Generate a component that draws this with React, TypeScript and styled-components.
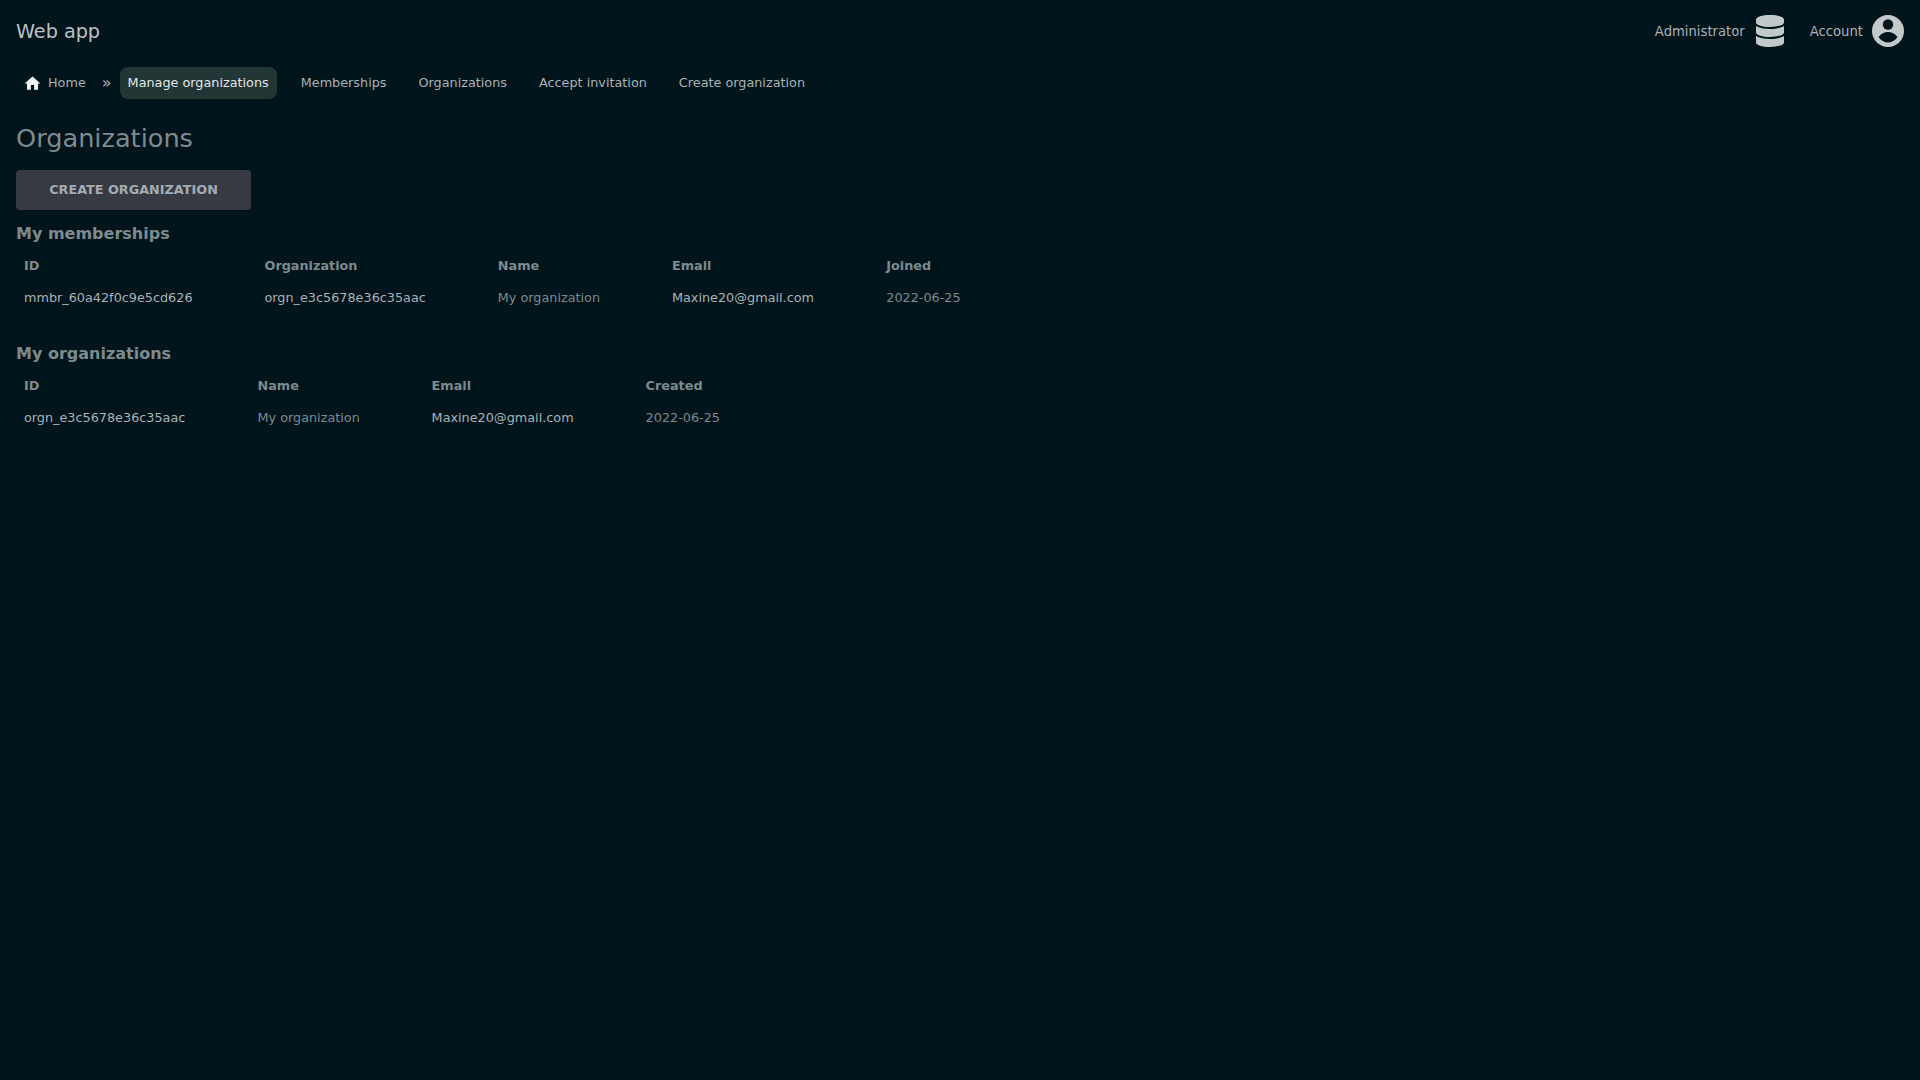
import React from "react";
import styled, { createGlobalStyle } from "styled-components";
import { FaDatabase } from "react-icons/fa";
import { MdHome } from "react-icons/md";

const Global = createGlobalStyle`
  html, body {
    margin: 0;
    height: 100%;
    background: #00141b;
    font-family: "DejaVu Sans", sans-serif;
  }
`;

const Page = styled.div`
  min-height: 1080px;
  background: #00141b;
  color: #7d8a8e;
  padding: 0 16px;
  box-sizing: border-box;
`;

const TopBar = styled.header`
  display: flex;
  align-items: center;
  justify-content: space-between;
  height: 62px;
`;

const Brand = styled.div`
  font-size: 19.2px;
  color: #bcc3c5;
`;

const UserMenu = styled.div`
  display: flex;
  align-items: center;
  gap: 24px;
`;

const UserItem = styled.div`
  display: flex;
  align-items: center;
  gap: 9px;
  font-size: 13.2px;
  color: #a9b2b5;

  svg {
    width: 32px;
    height: 32px;
    color: #c2c9ca;
  }
`;

const Tabs = styled.nav`
  display: flex;
  align-items: center;
  height: 32px;
  margin-top: 5px;
  font-size: 12.8px;
`;

const Tab = styled.a<{ $active?: boolean }>`
  display: flex;
  align-items: center;
  height: 32px;
  padding: 0 8px 2px;
  box-sizing: border-box;
  border-radius: 8px;
  white-space: nowrap;
  background: ${(p) => (p.$active ? "#213635" : "transparent")};
  color: ${(p) => (p.$active ? "#e3e8e8" : "#a9b2b5")};
  margin-right: 16px;
`;

const HomeTab = styled(Tab)`
  gap: 8px;
  margin-right: 0;

  svg {
    width: 19px;
    height: 19px;
    margin: 2px -1.5px 0 -1.5px;
    color: #f2f5f5;
  }
`;

const Separator = styled.span`
  color: #a9b2b5;
  font-size: 16px;
  margin: 0 8px 2px 8px;
`;

const Title = styled.h1`
  margin: 0;
  font-size: 25.6px;
  font-weight: 400;
  line-height: 32px;
  padding-top: 23px;
  color: #7d8a8e;
`;

const CreateButton = styled.button`
  display: block;
  width: 235px;
  height: 40px;
  margin-top: 16px;
  padding: 0 0 2px;
  border: 0;
  border-radius: 4px;
  background: #373a42;
  color: #a3abb3;
  font-family: inherit;
  font-size: 12.8px;
  font-weight: 700;
  text-transform: uppercase;
`;

const SectionTitle = styled.h2`
  margin: 0 0 3px;
  font-size: 16px;
  font-weight: 700;
  line-height: 24px;
  color: #7d8a8e;
`;

const Section = styled.section<{ $gap: number }>`
  margin-top: ${(p) => p.$gap}px;
`;

const Table = styled.table`
  border-collapse: collapse;
  font-size: 12.8px;

  th {
    text-align: left;
    font-weight: 700;
    color: #7d8a8e;
    padding: 0 8px;
    height: 32px;
  }

  td {
    padding: 0 8px;
    height: 32px;
    color: #a9b2b5;
    white-space: nowrap;
  }
`;

const Cell = styled.td<{ $dim?: boolean }>`
  && {
    color: ${(p) => (p.$dim ? "#7d8a8e" : "#a9b2b5")};
  }
`;

const Spaced = styled.th<{ $w: number }>`
  && {
    width: ${(p) => p.$w}px;
  }
`;

const AccountIcon = () => (
  <svg viewBox="0 0 32 32">
    <circle cx="16" cy="16" r="16" fill="currentColor" />
    <circle cx="16" cy="9.5" r="5.2" fill="#00141b" />
    <path
      d="M6.5 22C9 18.6 12.5 17 16 17s7 1.6 9.5 5c-2.5 3.6-6 5.5-9.5 5.5S9 25.6 6.5 22Z"
      fill="#00141b"
    />
  </svg>
);

export default function App() {
  return (
    <>
      <Global />
      <Page>
        <TopBar>
          <Brand>Web app</Brand>
          <UserMenu>
            <UserItem>
              Administrator
              <FaDatabase />
            </UserItem>
            <UserItem>
              Account
              <AccountIcon />
            </UserItem>
          </UserMenu>
        </TopBar>
        <Tabs>
          <HomeTab>
            <MdHome />
            Home
          </HomeTab>
          <Separator>»</Separator>
          <Tab $active>Manage organizations</Tab>
          <Tab>Memberships</Tab>
          <Tab>Organizations</Tab>
          <Tab>Accept invitation</Tab>
          <Tab>Create organization</Tab>
        </Tabs>
        <Title>Organizations</Title>
        <CreateButton>Create organization</CreateButton>
        <Section $gap={12}>
          <SectionTitle>My memberships</SectionTitle>
          <Table>
            <thead>
              <tr>
                <Spaced $w={224.5}>ID</Spaced>
                <Spaced $w={217.3}>Organization</Spaced>
                <Spaced $w={158.2}>Name</Spaced>
                <Spaced $w={198.3}>Email</Spaced>
                <Spaced $w={80}>Joined</Spaced>
              </tr>
            </thead>
            <tbody>
              <tr>
                <Cell>mmbr_60a42f0c9e5cd626</Cell>
                <Cell>orgn_e3c5678e36c35aac</Cell>
                <Cell $dim>My organization</Cell>
                <Cell>Maxine20@gmail.com</Cell>
                <Cell $dim>2022-06-25</Cell>
              </tr>
            </tbody>
          </Table>
        </Section>
        <Section $gap={29}>
          <SectionTitle>My organizations</SectionTitle>
          <Table>
            <thead>
              <tr>
                <Spaced $w={217.5}>ID</Spaced>
                <Spaced $w={158.1}>Name</Spaced>
                <Spaced $w={198}>Email</Spaced>
                <Spaced $w={80}>Created</Spaced>
              </tr>
            </thead>
            <tbody>
              <tr>
                <Cell>orgn_e3c5678e36c35aac</Cell>
                <Cell $dim>My organization</Cell>
                <Cell>Maxine20@gmail.com</Cell>
                <Cell $dim>2022-06-25</Cell>
              </tr>
            </tbody>
          </Table>
        </Section>
      </Page>
    </>
  );
}
